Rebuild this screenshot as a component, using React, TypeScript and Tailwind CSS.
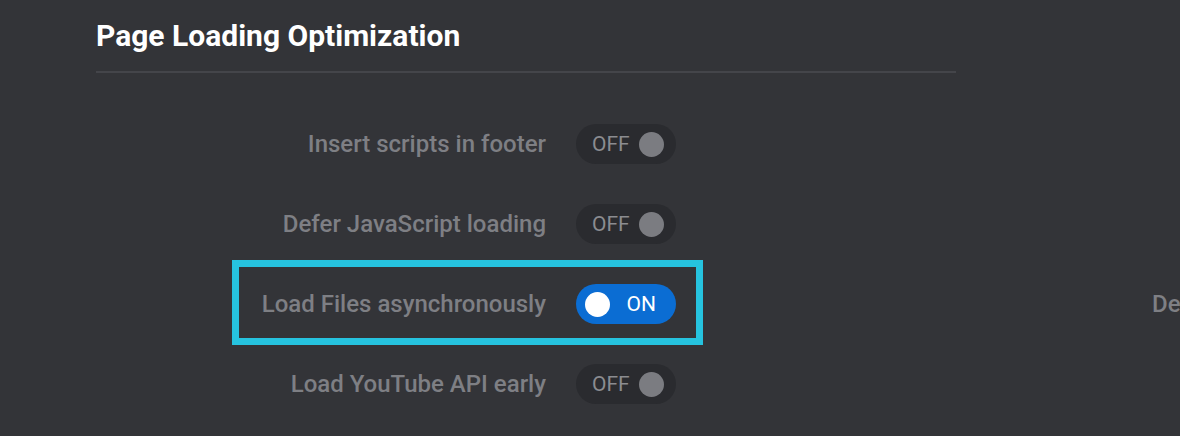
import React from 'react';

const font = { fontFamily: 'Roboto, "Liberation Sans", sans-serif' };

type Setting = { label: string; on: boolean; highlight?: boolean; extra?: string };

const settings: Setting[] = [
    { label: 'Insert scripts in footer', on: false },
    { label: 'Defer JavaScript loading', on: false },
    { label: 'Load Files asynchronously', on: true, highlight: true, extra: 'Defer CSS loading' },
    { label: 'Load YouTube API early', on: false },
];

const Toggle = ({ on }: { on: boolean }) =>
    on ? (
        <div className="flex items-center w-[100px] h-[40px] rounded-full bg-[#0b6dd3] pl-[9px] pr-[20px] justify-between">
            <span className="block w-[25px] h-[25px] rounded-full bg-white" />
            <span className="text-white text-[21px] leading-none">ON</span>
        </div>
    ) : (
        <div className="flex items-center w-[100px] h-[40px] rounded-full bg-[#2a2b2f] pl-[16px] pr-[12px] justify-between">
            <span className="text-[#8b8c90] text-[21px] leading-none">OFF</span>
            <span className="block w-[25px] h-[25px] rounded-full bg-[#7b7c81]" />
        </div>
    );

export default function App() {
    return (
        <div className="w-[1180px] h-[436px] overflow-hidden bg-[#333438]" style={font}>
            <div className="pl-[96px] pt-[18px]">
                <h1 className="text-white font-bold text-[30px] leading-[36px]">Page Loading Optimization</h1>
                <div className="w-[860px] h-[2px] bg-[#44454a] mt-[17px]" />
            </div>

            <div className="flex flex-col pt-[31px]">
                {settings.map((s) => (
                    <div key={s.label} className="relative flex items-center h-[80px]">
                        <div className="shrink-0 w-[546px] text-right text-[24px] font-medium text-[#7e7f84]">{s.label}</div>
                        <div className="shrink-0 ml-[30px]">
                            <Toggle on={s.on} />
                        </div>
                        {s.extra && (
                            <div className="shrink-0 ml-[476px] text-[24px] font-medium text-[#7e7f84] whitespace-nowrap">{s.extra}</div>
                        )}
                        {s.highlight && (
                            <div className="absolute left-[232px] top-[-4px] w-[471px] h-[85px] border-[7px] border-[#26c3df] pointer-events-none" />
                        )}
                    </div>
                ))}
            </div>
        </div>
    );
}
